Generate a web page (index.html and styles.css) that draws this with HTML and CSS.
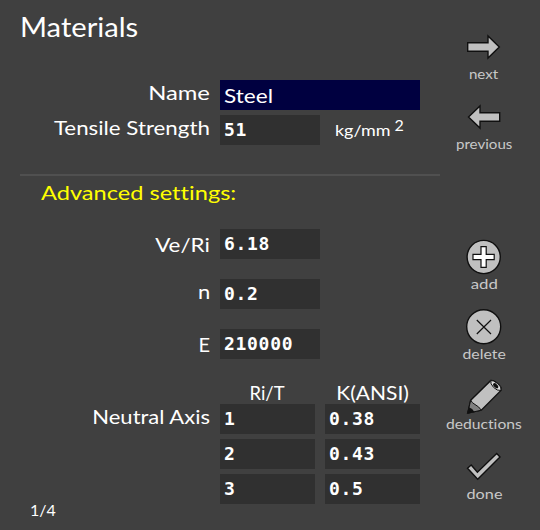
FILE: index.html
```html
<!DOCTYPE html>
<html lang="en">
<head>
<meta charset="utf-8">
<title>Materials</title>
<link rel="stylesheet" href="styles.css">
</head>
<body>
<main class="form">
  <h1><span class="t-title">Materials</span></h1>
  <div class="row">
    <label class="label"><span class="t-name">Name</span></label>
    <div class="field wide selected"><span class="t-steel">Steel</span></div>
  </div>
  <div class="row tensile">
    <label class="label"><span class="t-tensile">Tensile Strength</span></label>
    <div class="field">51</div>
    <div class="unit"><span class="t-unit">kg/mm</span><span class="power">2</span></div>
  </div>
  <hr>
  <h2><span class="t-advanced">Advanced settings:</span></h2>
  <div class="row spaced">
    <label class="label low"><span class="t-ve">Ve/Ri</span></label>
    <div class="field">6.18</div>
  </div>
  <div class="row spaced">
    <label class="label"><span class="t-n">n</span></label>
    <div class="field">0.2</div>
  </div>
  <div class="row spaced">
    <label class="label low"><span>E</span></label>
    <div class="field">210000</div>
  </div>
  <div class="axis">
    <label class="label"><span class="t-axis">Neutral Axis</span></label>
    <div class="table">
      <div class="head"><span class="t-rit">Ri/T</span></div>
      <div class="head"><span class="t-ansi">K(ANSI)</span></div>
      <div class="field">1</div><div class="field">0.38</div>
      <div class="field">2</div><div class="field">0.43</div>
      <div class="field">3</div><div class="field">0.5</div>
    </div>
  </div>
  <div class="page"><span>1/4</span></div>
</main>
<nav class="actions">
  <div class="action">
    <svg width="40" height="38" viewBox="0 0 40 38"><path d="M3.7 15.8H24V9L35.3 20 24 31V24.2H3.7z"/></svg>
    <span class="t-next">next</span>
  </div>
  <div class="action">
    <svg width="40" height="38" viewBox="0 0 40 38"><path d="M4.5 20 16 9V15.8H35.7V24.2H16V31z"/></svg>
    <span class="t-previous">previous</span>
  </div>
  <div class="action apart">
    <svg width="40" height="38" viewBox="0 0 40 38"><circle cx="19.7" cy="20" r="16.6"/><path class="plus" d="M17 9.7h5.2v7.7h8v5.2h-8v7.7H17v-7.7H9v-5.2h8z"/></svg>
    <span class="t-add">add</span>
  </div>
  <div class="action">
    <svg width="40" height="38" viewBox="0 0 40 38"><circle cx="19.7" cy="19.8" r="17"/><path class="cross" d="M12.8 13 27 27M27 13 12.8 27"/></svg>
    <span class="t-delete">delete</span>
  </div>
  <div class="action">
    <svg width="40" height="38" viewBox="0 0 40 38"><path d="M6.7 23.2 26.8 3.5Q29 3 33.5 6.5T37 13.5L17.3 33.2 3.7 36.2z"/><path class="wood" d="M6.7 23.2Q8 26 11 27.5 15 29.5 17.3 33.2L3.7 36.2z"/><path class="lead" d="M5 30.3Q8.500 31.5 10.5 35L3.5 36.5z"/><path class="end" d="M26.8 3.5Q29 3 33.5 6.5T37 13.5Q33 14 29.5 10.3T26.8 3.5z"/><ellipse class="lead" cx="31.7" cy="8.7" rx="3.2" ry="1.7" transform="rotate(45 31.7 8.7)"/></svg>
    <span class="t-deductions">deductions</span>
  </div>
  <div class="action">
    <svg width="40" height="38" viewBox="0 0 40 38"><path d="M3.5 21.2 7.2 18 13.4 25.2 32.7 6.5 36 10 13.7 32.3z"/></svg>
    <span class="t-done">done</span>
  </div>
</nav>
</body>
</html>
```

FILE: styles.css
```css
* { box-sizing: border-box; }
body {
  margin: 0;
  width: 540px;
  height: 530px;
  display: flex;
  background: #404040;
  color: #fff;
  font: 20px/24px "Century Gothic", Lato, sans-serif;
  font-variant-ligatures: none;
  overflow: hidden;
}
span { display: inline-block; white-space: nowrap; transform-origin: left; }
.label span { transform-origin: right; }
.head span, .action span { transform-origin: center; }
.form { width: 444px; display: flex; flex-direction: column; }
h1 { margin: 0; padding: 12px 0 0 20px; height: 80px; font-size: 26px; font-weight: 400; line-height: 30px; }
.row { display: grid; grid-template-columns: 210px 100px 100px; column-gap: 10px; height: 30px; }
.tensile { margin-top: 5px; }
.label { text-align: right; }
.low { line-height: 30px; }
.field {
  height: 30px;
  padding-left: 4px;
  background: #303030;
  font: bold 18px/30px "DejaVu Sans Mono", monospace;
  letter-spacing: 0.7px;
}
.wide { grid-column: 2 / 4; width: 200px; }
.selected { background: #000040; font: 20px/30px "Century Gothic", Lato, sans-serif; letter-spacing: 0; }
.unit { padding-left: 5px; font-size: 16px; line-height: 30px; display: flex; gap: 10px; }
.power { line-height: 19px; }
hr { width: 420px; height: 2px; margin: 29px 0 0 20px; border: 0; background: #505050; }
h2 { margin: 0; padding: 4px 0 0 41px; height: 53px; color: #ff0; font-size: 20px; font-weight: 400; line-height: 24px; }
.spaced { margin-bottom: 20px; }
.axis { display: flex; gap: 10px; }
.axis .label { width: 210px; padding-top: 25px; }
.table { display: grid; grid-template-columns: 95px 95px; grid-template-rows: 20px repeat(3, 30px); gap: 5px 10px; }
.head { text-align: center; line-height: 26px; }
.page { padding-left: 30px; font-size: 16px; line-height: 12px; }
.actions { width: 80px; padding-top: 27px; display: flex; flex-direction: column; gap: 14px; }
.action { display: flex; flex-direction: column; align-items: center; height: 56px; font-size: 14px; line-height: 18px; color: #c8c8c8; }
.apart { margin-top: 70px; }

/* Widened lettering */
.t-title { transform: scaleX(1.12); }
.t-name { transform: scaleX(1.19); }
.t-steel { transform: scaleX(1.13); }
.t-tensile { transform: scaleX(1.115); }
.t-unit { transform: scaleX(1.12); }
.t-advanced { transform: scaleX(1.18); }
.t-ve { transform: scaleX(1.12); }
.t-n { transform: scaleX(1.1); }
.t-axis { transform: scaleX(1.1); }
.t-rit { transform: scaleX(0.92); }
.t-ansi { transform: scaleX(1.05); }
.t-next { transform: scaleX(1.08); }
.t-previous { transform: scaleX(1.08); }
.t-add { transform: scaleX(1.2); }
.t-delete { transform: scaleX(1.13); }
.t-deductions { transform: scaleX(1.12); }
.t-done { transform: scaleX(1.16); }

svg { display: block; flex: none; fill: #c0c0c0; stroke: #101010; stroke-width: 1.4; stroke-linejoin: miter; }
.plus { fill: #fff; stroke-width: 1.2; }
.cross { fill: none; stroke-width: 1.2; }
.wood { fill: #808080; stroke-width: 1; }
.lead { fill: #101010; stroke: none; }
.end { fill: #e0e0e0; stroke-width: 1; }
```
